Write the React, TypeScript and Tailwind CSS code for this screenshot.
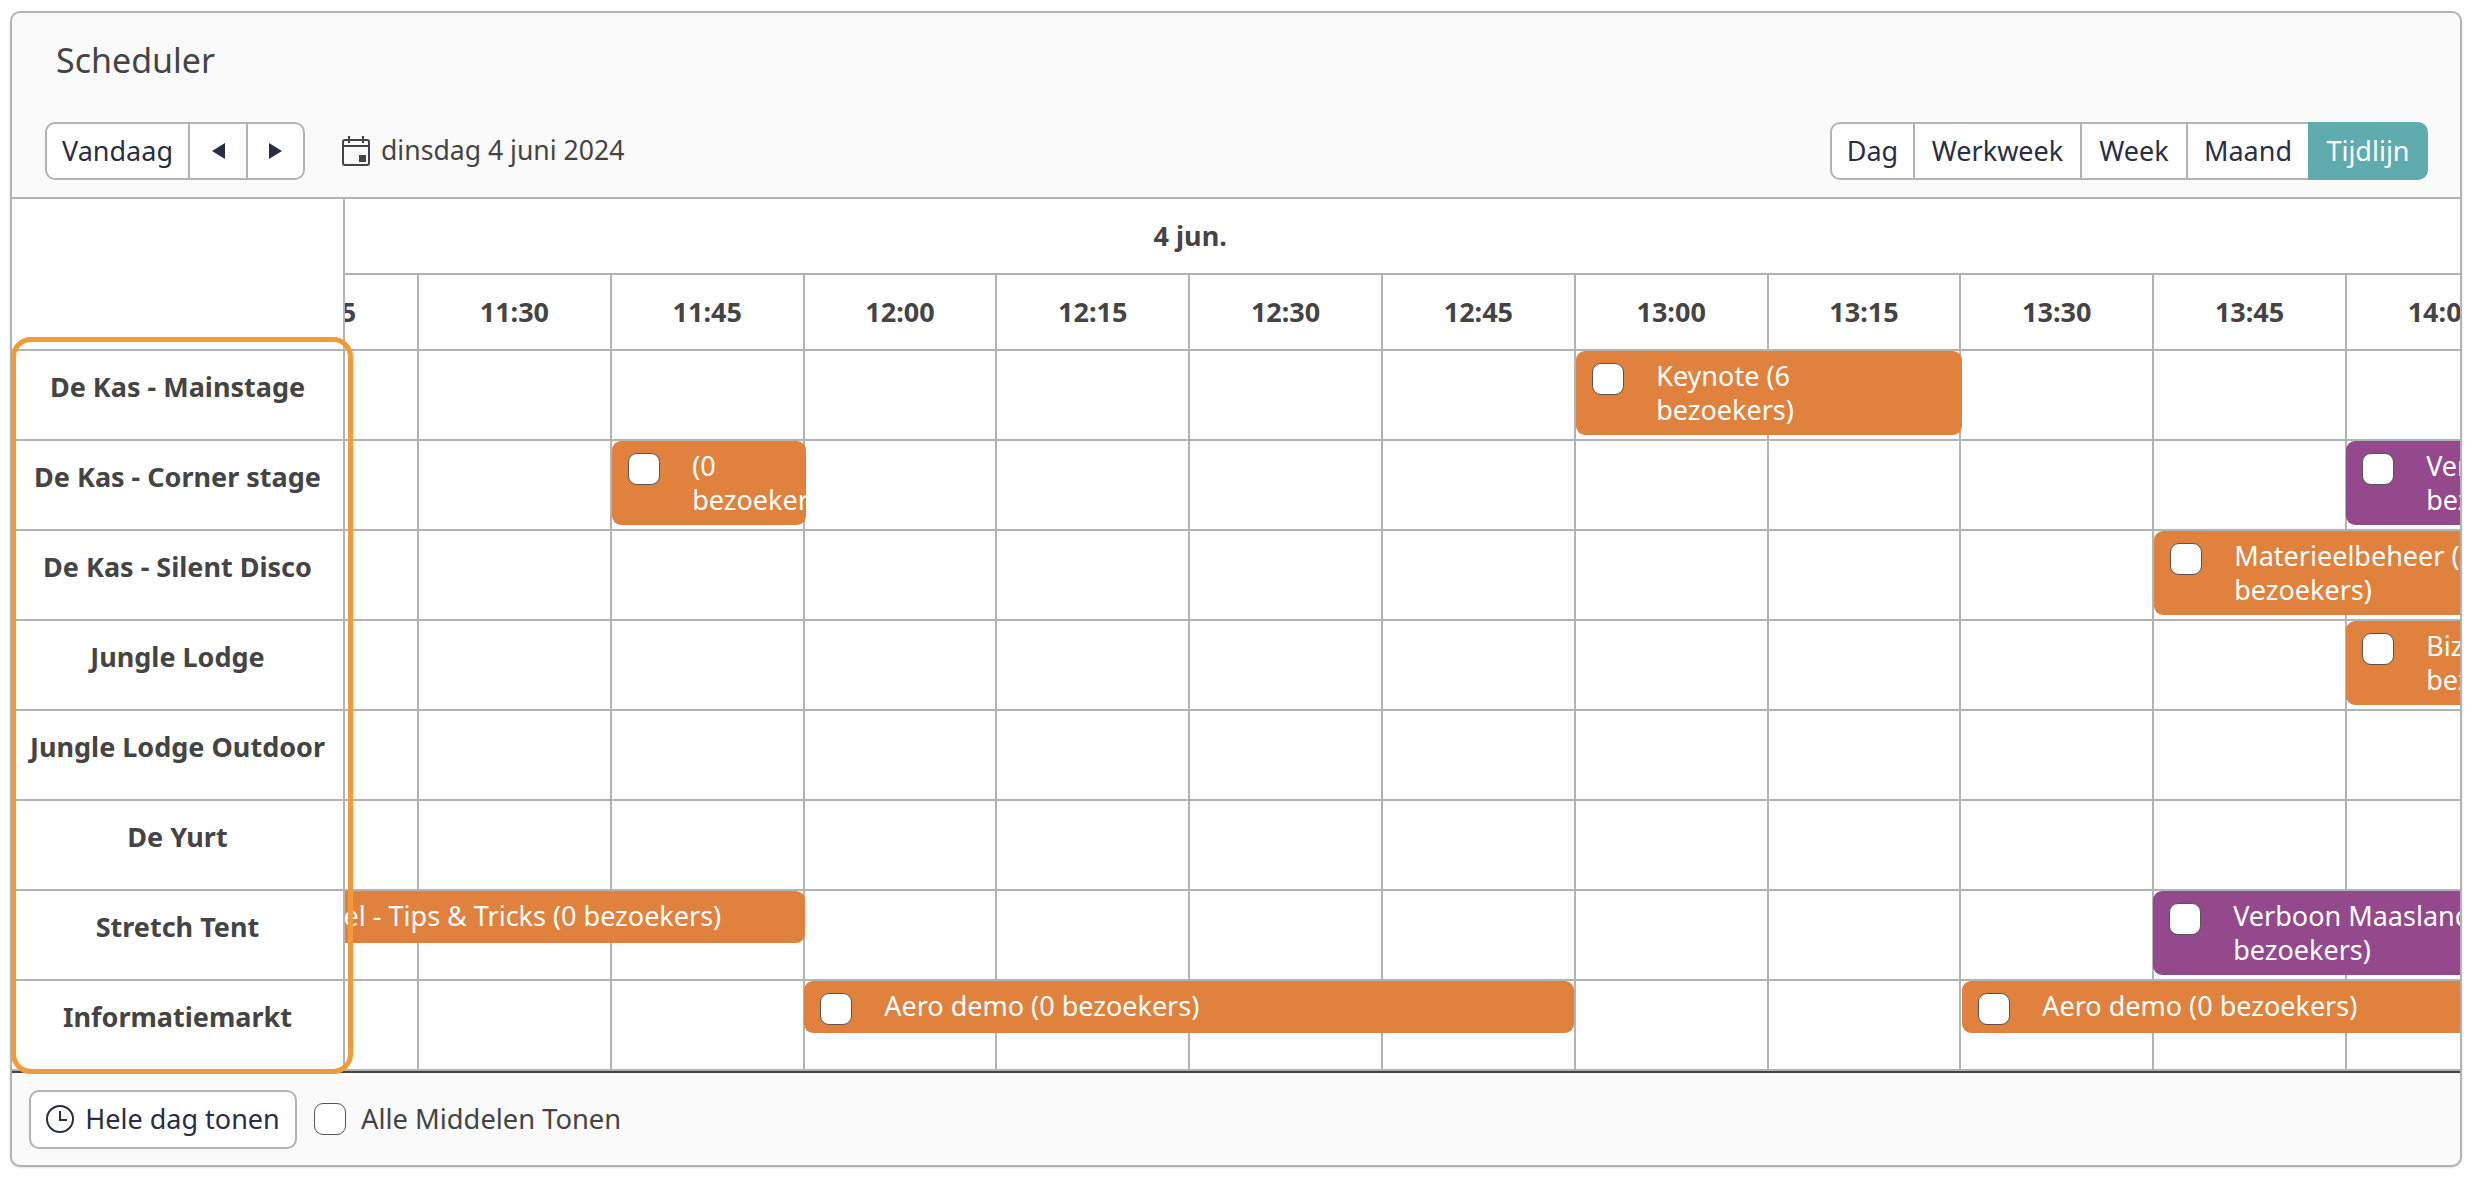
const resources = [
  'De Kas - Mainstage',
  'De Kas - Corner stage',
  'De Kas - Silent Disco',
  'Jungle Lodge',
  'Jungle Lodge Outdoor',
  'De Yurt',
  'Stretch Tent',
  'Informatiemarkt',
];

const times = ['11:15', '11:30', '11:45', '12:00', '12:15', '12:30', '12:45', '13:00', '13:15', '13:30', '13:45', '14:00'];

const ORANGE = 'bg-[#e0823d]';
const PURPLE = 'bg-[#94498c]';

type Ev = { cls: string; color: string; lines: string[] };

const events: Record<number, Ev[]> = {
  0: [{ cls: 'left-[1350px] w-[386px] h-[84px]', color: ORANGE, lines: ['Keynote (6', 'bezoekers)'] }],
  1: [
    { cls: 'left-[386px] w-[194px] h-[84px]', color: ORANGE, lines: ['(0', 'bezoekers)'] },
    { cls: 'left-[2120px] w-[400px] h-[84px]', color: PURPLE, lines: ['Verboon Maasland (0', 'bezoekers)'] },
  ],
  2: [{ cls: 'left-[1928px] w-[600px] h-[84px]', color: ORANGE, lines: ['Materieelbeheer (0', 'bezoekers)'] }],
  3: [{ cls: 'left-[2120px] w-[400px] h-[84px]', color: ORANGE, lines: ['Bizniz (0', 'bezoekers)'] }],
  6: [{ cls: 'left-[1927px] w-[600px] h-[84px]', color: PURPLE, lines: ['Verboon Maasland (0', 'bezoekers)'] }],
  7: [
    { cls: 'left-[578px] w-[770px] h-[52px]', color: ORANGE, lines: ['Aero demo (0 bezoekers)'] },
    { cls: 'left-[1736px] w-[700px] h-[52px]', color: ORANGE, lines: ['Aero demo (0 bezoekers)'] },
  ],
};

function EventBar({ ev }: { ev: Ev }) {
  return (
    <div className={`absolute top-0 flex overflow-hidden rounded-[9px] text-white ${ev.color} ${ev.cls}`}>
      <span className="mt-[12px] ml-[16px] h-[32px] w-[32px] shrink-0 rounded-[9px] border border-[#555] bg-white" />
      <div className="ml-[32px] pt-[8px] text-[27px] leading-[34px] whitespace-nowrap">
        {ev.lines.map((l) => (
          <div key={l}>{l}</div>
        ))}
      </div>
    </div>
  );
}

function Row({ index }: { index: number }) {
  return (
    <div className="relative flex h-[90px]">
      {times.map((t) => (
        <div key={t} className="h-full w-[192.8px] shrink-0 border-r-2 border-b-2 border-[#b3b3b3]" />
      ))}
      {(events[index] || []).map((ev, i) => (
        <EventBar key={i} ev={ev} />
      ))}
      {index === 6 && (
        <div className="absolute top-0 left-0 flex h-[52px] w-[579px] items-center justify-end overflow-hidden rounded-[9px] bg-[#e0823d] pr-[84px] pb-[2px] text-[27px] whitespace-nowrap text-white">
          Panel - Tips &amp; Tricks (0 bezoekers)
        </div>
      )}
    </div>
  );
}

function CalendarIcon() {
  return (
    <svg width="28" height="30" viewBox="0 0 28 30" fill="none" stroke="#444" strokeWidth="2">
      <rect x="1" y="4" width="26" height="25" rx="2" />
      <path d="M1 10h26" />
      <path d="M7 0v7M21 0v7" />
      <rect x="17" y="19" width="7" height="7" fill="#444" stroke="none" />
    </svg>
  );
}

function ClockIcon() {
  return (
    <svg width="28" height="28" viewBox="0 0 28 28" fill="none" stroke="#2b2d42" strokeWidth="2">
      <circle cx="14" cy="14" r="13" />
      <path d="M14 6v9h7" />
    </svg>
  );
}

export default function App() {
  return (
    <div className="relative h-[1178px] w-[2474px] overflow-hidden bg-white pt-[11px] pl-[10px] font-['Noto_Sans',sans-serif] text-[#444]">
      <div className="flex h-[1156px] w-[2452px] flex-col overflow-hidden rounded-[10px] border-2 border-[#b3b3b3] bg-[#fafafa] shadow-sm">
        {/* title */}
        <div className="flex h-[91px] shrink-0 items-center pt-[3px] pl-[44px] text-[34px]">Scheduler</div>

        {/* toolbar */}
        <div className="flex h-[95px] shrink-0 items-center justify-between border-t border-b-2 border-t-[#fcfcfc] border-b-[#b3b3b3] pr-[32px] pl-[33px] text-[27px] text-[#2b2d42]">
          <div className="flex items-center">
            <div className="flex h-[58px] rounded-[10px] border-2 border-[#b3b3b3] bg-white">
              <div className="flex w-[143px] items-center justify-center border-r-2 border-[#b3b3b3]">Vandaag</div>
              <div className="flex w-[58px] items-center justify-center border-r-2 border-[#b3b3b3]">
                <svg width="13" height="16" viewBox="0 0 13 16" fill="#2b2d42">
                  <path d="M13 0v16L0 8z" />
                </svg>
              </div>
              <div className="flex w-[55px] items-center justify-center">
                <svg width="13" height="16" viewBox="0 0 13 16" fill="#2b2d42">
                  <path d="M0 0v16l13-8z" />
                </svg>
              </div>
            </div>
            <div className="ml-[37px] flex items-center gap-[11px] text-[26.6px] text-[#444]">
              <CalendarIcon />
              <span>dinsdag 4 juni 2024</span>
            </div>
          </div>
          <div className="flex h-[58px]">
            <div className="flex w-[85px] items-center justify-center rounded-l-[10px] border-2 border-[#b3b3b3] bg-white">Dag</div>
            <div className="flex w-[167px] items-center justify-center border-y-2 border-r-2 border-[#b3b3b3] bg-white">Werkweek</div>
            <div className="flex w-[106px] items-center justify-center border-y-2 border-r-2 border-[#b3b3b3] bg-white">Week</div>
            <div className="flex w-[120px] items-center justify-center border-y-2 border-[#b3b3b3] bg-white">Maand</div>
            <div className="flex w-[120px] items-center justify-center rounded-r-[10px] bg-[#5fabae] text-white">Tijdlijn</div>
          </div>
        </div>

        {/* scheduler */}
        <div className="flex h-[872px] shrink-0 bg-white">
          <div className="w-[333px] shrink-0 border-r-2 border-[#b3b3b3]">
            <div className="h-[152px] border-b-2 border-[#b3b3b3]" />
            {resources.map((r) => (
              <div key={r} className="flex h-[90px] items-center justify-center border-b-2 border-[#b3b3b3] pb-[16px] text-[27px] font-bold whitespace-nowrap">
                {r}
              </div>
            ))}
          </div>
          <div className="min-w-0 flex-1 overflow-hidden">
            <div className="-ml-[118.8px] w-[2314px]">
              <div className="h-[76px] border-b-2 border-[#b3b3b3]">
                <div className="flex h-full w-[1928px] items-center justify-center text-[27px] font-bold">4 jun.</div>
              </div>
              <div className="flex h-[76px]">
                {times.map((t) => (
                  <div key={t} className="flex h-full w-[192.8px] shrink-0 items-center justify-center border-r-2 border-b-2 border-[#b3b3b3] text-[27px] font-bold">
                    {t}
                  </div>
                ))}
              </div>
              {resources.map((r, i) => (
                <Row key={r} index={i} />
              ))}
            </div>
          </div>
        </div>

        {/* footer */}
        <div className="flex flex-1 items-center border-t-2 border-[#444] pl-[17px] text-[27px]">
          <div className="flex h-[59px] w-[268px] items-center justify-center gap-[11px] rounded-[10px] border-2 border-[#b3b3b3] bg-white text-[#2b2d42]">
            <ClockIcon />
            <span>Hele dag tonen</span>
          </div>
          <span className="ml-[17px] h-[32px] w-[32px] rounded-[9px] border border-[#555] bg-white" />
          <span className="ml-[15px] text-[27.3px]">Alle Middelen Tonen</span>
        </div>
      </div>

      {/* highlight around resources */}
      <div className="pointer-events-none absolute top-[337px] left-[11px] h-[737px] w-[342px] rounded-[20px] border-[5px] border-[#f09a38]" />
    </div>
  );
}
